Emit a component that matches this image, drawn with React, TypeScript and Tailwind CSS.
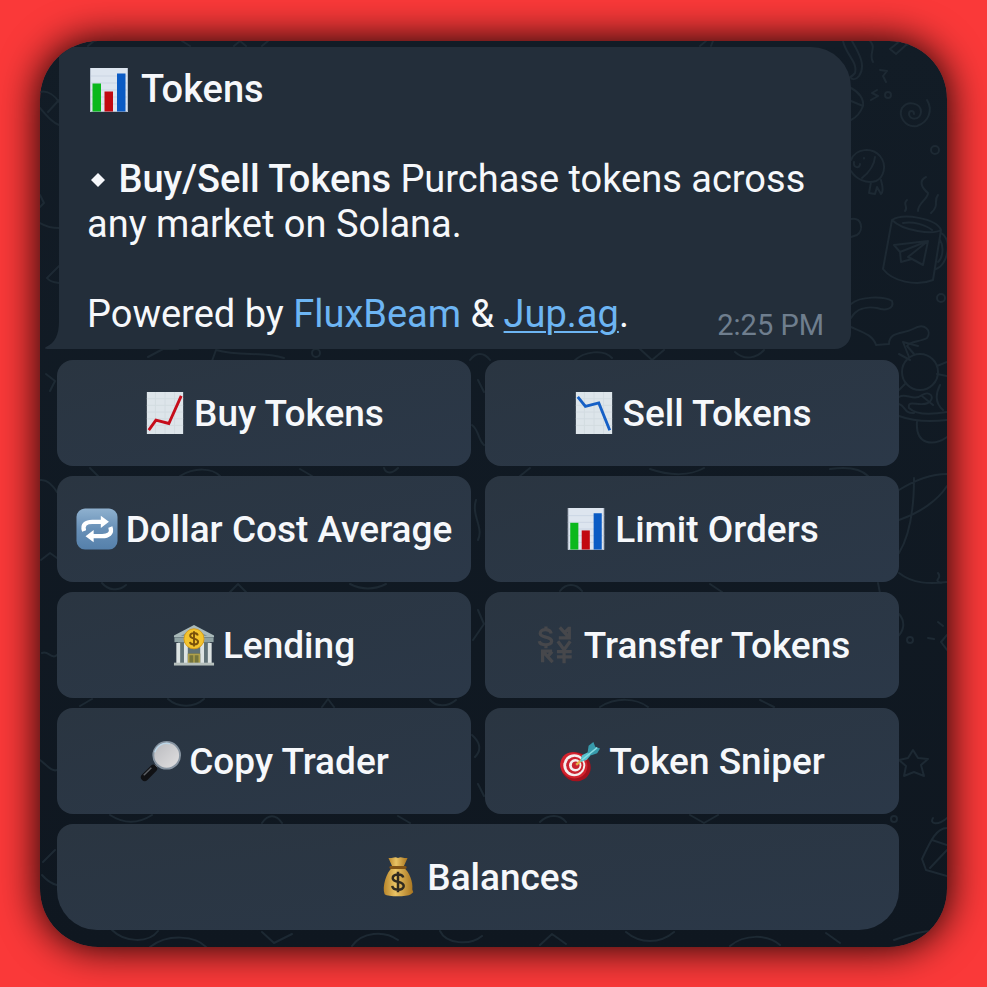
import type { ReactNode } from "react";
import { clsx } from "clsx";

const BarChart = () => (
  <>
    <rect x="3" y="0" width="38" height="44" fill="#dde5ef" />
    <path d="M3 8H41M3 15H41M3 22H41M3 29H41M3 36H41" stroke="#cbd5e3" strokeWidth="1" />
    <path d="M3.5 0V43.5H40.5V0" fill="none" stroke="#b3bdcb" strokeWidth="1" />
    <rect x="5.5" y="15.5" width="8.5" height="28" fill="#0bb81c" />
    <rect x="17.5" y="23.5" width="8.5" height="20" fill="#c20910" />
    <rect x="30" y="5.5" width="8.5" height="38" fill="#0b5bc4" />
  </>
);

const ChartUp = () => (
  <>
    <rect x="3" y="0" width="38" height="44" fill="#dde5ea" />
    <path d="M3 7H41M3 14H41M3 21H41M3 28H41M3 35H41M12 0V44M22 0V44M32 0V44" stroke="#d2dbe1" strokeWidth="1" />
    <path d="M5 40L12.5 29.5L26 33L39 4" fill="none" stroke="#c60d1b" strokeWidth="3" />
  </>
);

const ChartDown = () => (
  <>
    <rect x="3" y="0" width="38" height="44" fill="#dde5ea" />
    <path d="M3 7H41M3 14H41M3 21H41M3 28H41M3 35H41M12 0V44M22 0V44M32 0V44" stroke="#d2dbe1" strokeWidth="1" />
    <path d="M5 5L13 15L27 11.5L38.5 40" fill="none" stroke="#1660c6" strokeWidth="3" />
  </>
);

const Repeat = () => (
  <>
    <defs>
      <linearGradient id="repeat-bg" x1="0" y1="0" x2="0" y2="1">
        <stop offset="0" stopColor="#8fb1cf" />
        <stop offset="0.5" stopColor="#6890b7" />
        <stop offset="1" stopColor="#5580ab" />
      </linearGradient>
    </defs>
    <rect x="0.5" y="0.5" width="43" height="43" rx="9" fill="url(#repeat-bg)" />
    <path d="M8.500 24C6 17 11 14.500 17 14.500H27M36 20C38.500 27 33.500 29.500 27.500 29.500H17" fill="none" stroke="#fff" strokeWidth="4.500" />
    <path d="M26 8L34.500 14.500L26 21ZM18.500 23L10 29.500L18.500 36Z" fill="#fff" />
  </>
);

const Bank = () => (
  <>
    <rect x="5" y="17" width="34" height="24" fill="#5f7176" />
    <path d="M22 1L43 12V14H1V12Z" fill="#a9b9b9" />
    <path d="M22 5L36 12.500H8Z" fill="#7e9496" />
    <rect x="1.500" y="14" width="41" height="5" fill="#8fa2a3" />
    <path d="M5.500 20V41M13.500 20V41M30.500 20V41M38.500 20V41" stroke="#dce3e2" strokeWidth="4" />
    <path d="M15.500 41V31H28.500V41" fill="#74753d" />
    <path d="M16.500 41V32H27.500V41M22 32V41" fill="none" stroke="#b0a14a" strokeWidth="1.500" />
    <rect x="1" y="40.500" width="42" height="3" fill="#b5bfbc" />
    <circle cx="22" cy="15.500" r="10.500" fill="#f4c42d" stroke="#d99c18" />
    <path d="M26 12C25 8.500 18 8.800 18 12.200C18 16 26.300 14.500 26.300 18.600C26.300 22.300 18.500 22.500 17.700 18.800M22 7.500V23.500" fill="none" stroke="#79500b" strokeWidth="2" />
  </>
);

const Exchange = () => (
  <g fill="none" stroke="#46474b" strokeWidth="3.400">
    <path d="M18 10C17 4.500 6.500 4.500 6.500 10C6.500 15 18.500 12.500 18.500 18C18.500 23 6.500 23 5.500 18M12.500 2.500V6.500M12.500 21.500V25.500" />
    <path d="M37 3V14.500H26M27 3.500L36 13.500M32 9L37 4" />
    <path d="M25 18L31.500 27L38 18M31.500 27V41M24 29H39.500M24 34.500H39.500" />
    <path d="M9 40V28.500H19M10 29.500L19.500 40M14.500 34L19 29" />
  </g>
);

const Magnifier = () => (
  <>
    <defs>
      <linearGradient id="glass" x1="0" y1="0" x2="1" y2="1">
        <stop offset="0" stopColor="#b8b9bd" />
        <stop offset="1" stopColor="#e2e1e2" />
      </linearGradient>
    </defs>
    <path d="M18 27L13 32" stroke="#a7acb2" strokeWidth="4" />
    <path d="M15 30L6 39" stroke="#101114" strokeWidth="8" strokeLinecap="round" />
    <path d="M13 29L5 37" stroke="#5c5f64" strokeWidth="1.500" />
    <circle cx="29" cy="16" r="14" fill="url(#glass)" stroke="#8794a1" strokeWidth="2" />
    <path d="M16.500 13C18.500 6 25.500 2 32.500 4" fill="none" stroke="#bcd6e7" strokeWidth="1.500" />
  </>
);

const Target = () => (
  <>
    <ellipse cx="17.500" cy="28" rx="16" ry="15" transform="rotate(30 17.500 28)" fill="#a4121e" />
    <ellipse cx="15.500" cy="26.500" rx="14.500" ry="13.500" transform="rotate(30 15.500 26.500)" fill="#d3222d" />
    <circle cx="16" cy="26.500" r="11.500" fill="#f4eeee" />
    <circle cx="16.500" cy="26.500" r="9" fill="#c92430" />
    <circle cx="17" cy="26.500" r="6.500" fill="#f4eeee" />
    <circle cx="17.500" cy="26.500" r="4" fill="#c92430" />
    <path d="M18 26L26 19" stroke="#e2b34a" strokeWidth="2.500" />
    <path d="M22 23L24 16L32 12L34 15L29 21Z" fill="#55c0cd" />
    <path d="M30 13L31 6L36 2L38 7L43 9L40 14L34 16Z" fill="#379aab" />
    <path d="M24 21L40 8" stroke="#89dce2" strokeWidth="1.500" />
  </>
);

const MoneyBag = () => (
  <>
    <defs>
      <linearGradient id="bag" x1="0" y1="0" x2="1" y2="0">
        <stop offset="0" stopColor="#b9862b" />
        <stop offset="0.4" stopColor="#e9c364" />
        <stop offset="1" stopColor="#a8741f" />
      </linearGradient>
    </defs>
    <path d="M12 2C16 3 18 0 22 2C26 0 28 3 32 2L28 11H16Z" fill="url(#bag)" />
    <path d="M16 12H28C34 17 38 27 37 35L38 38L35.500 40C31 43 12 43 8 40C5 32 10 17 16 12Z" fill="url(#bag)" />
    <path d="M14.500 12H29.500" stroke="#825416" strokeWidth="3" strokeLinecap="round" />
    <path d="M27.500 22.500C26.500 18 16.500 18.500 16.500 23.200C16.500 28.500 28 25.500 28 31.500C28 36.800 16.500 36.500 16 31.300M22 16.500V38" fill="none" stroke="#302a20" strokeWidth="2.600" />
  </>
);

// Chat wallpaper line art, drawn in the gutters around the bubble and the keyboard.
const Wallpaper = () => (
  <svg
    viewBox="40 41 907 906"
    preserveAspectRatio="xMidYMid slice"
    className="absolute inset-0 size-full"
    fill="none"
    stroke="#1d2933"
    strokeWidth="2"
    strokeLinecap="round"
    strokeLinejoin="round"
    aria-hidden="true"
  >
    {/* top right */}
    <path d="M843 41C846 55 858 62 855 73C850 79 846 79 842 74M852 41C860 55 866 66 859 76C856 80 852 80 850 77M870 41C877 48 868 54 873 62" />
    <path d="M890 49L896 54L906 45C914 41 920 44 926 48M890 49L900 41M880 70L887 71L883 76L886 82M877 90L872 93L878 96L871 100" />
    <circle cx="888" cy="95" r="3" />
    <path d="M851 88C859 92 864 99 863 106C860 114 855 118 851 120M851 101L863 106" />
    <path d="M927 100C933 110 929 122 917 126C905 128 898 116 902 108C908 100 921 103 921 112C920 121 909 120 909 114C909 110 914 110 914 114" />
    <circle cx="935" cy="150" r="4" />
    <path d="M851 160C856 148 872 147 880 156C888 166 883 178 876 181C866 184 856 179 851 171M875 157C874 168 867 174 862 178M871 182L869 193L875 194L877 187L881 194C885 190 881 182 881 180M854 162C853 168 860 169 860 164M864 158V158.500" />
    {/* mug */}
    <path d="M892 220C903 213 936 218 941 230C933 235 903 231 892 220ZM892 220L883 269C892 281 916 287 933 280L941 230M903 223C913 221 926 225 932 230M941 233C952 238 949 264 936 269M940 240C944 246 943 258 938 262" />
    <path d="M894 245L928 241L923 265L912 259L901 262L900 252L894 245M900 252L928 241L908 257L912 259" />
    <path d="M926 177C918 181 922 188 928 193C928 199 918 203 918 211M938 195C933 201 940 205 931 213M907 200C902 204 909 207 905 211" />
    <path d="M851 219C862 217 864 230 857 235L851 237" />
    <circle cx="941" cy="298" r="4" />
    <path d="M851 304C860 296 884 296 892 301C895 309 885 311 877 308C866 306 856 309 851 318M851 327C862 332 873 335 876 345L889 344C889 331 904 334 913 329C925 322 932 331 927 338C920 342 910 341 907 346L914 354" />
    <circle cx="920" cy="372" r="18" />
    <path d="M909 357L903 342L918 346M899 354L910 360M937 366L947 362M937 374L947 376M905 384L899 390M899 397C906 392 913 402 922 395C930 390 936 398 928 403C919 407 907 399 909 408C916 415 930 415 947 412M899 416C915 422 930 422 947 420M899 404C906 406 904 414 914 413M917 421C915 446 934 446 947 437M940 385C935 395 936 404 943 410M922 396L933 405" />
    <path d="M899 490C915 480 932 474 947 474M914 478C914 510 910 535 899 553M899 520C920 513 938 500 947 486M899 573C913 584 930 584 947 582M938 573C943 579 932 580 941 583M899 614C906 622 904 632 896 638M878 583L880 593" />
    <circle cx="910" cy="640" r="3" />
    <path d="M928 638L934 639M938 622L943 626M947 635L941 642L947 650" />
    <path d="M913 750L918 758L928 759L921 765L924 776L914 772L904 776L906 766L899 760L908 758Z" />
    <path d="M947 828C936 828 930 842 922 859L926 870L947 876M947 850L930 868M932 840L947 845M933 818C929 824 938 826 947 818M894 940C910 934 922 931 934 931" />
    {/* left edge */}
    <path d="M40 92C48 90 55 96 59 102M40 108C48 117 52 122 59 125M48 112L59 100M40 195L44 203L40 207M40 223C47 227 52 228 59 228M47 278L59 266M47 278C51 283 55 282 59 283M46 374L55 381L50 391M40 480C47 479 52 484 57 492M41 560L50 553L57 558M42 653C48 650 52 660 57 655M40 760C48 766 52 772 57 770M43 862L55 850M42 875C48 882 53 884 57 885" />
    {/* gaps between rows */}
    <path d="M94 41L88 46M182 41L190 46M234 46L240 41L246 46M262 46L268 41M700 46L706 41M711 46L713 41M148 357L163 349H178M212 361L216 350C240 357 262 351 284 358" />
    <circle cx="316" cy="353" r="4" />
    <path d="M470 360C476 352 484 352 490 360M574 361C584 351 604 349 612 358M640 349L652 360L664 350M735 352C745 361 757 358 764 350" />
    <path d="M90 468L98 476M180 476C195 467 212 468 220 476M300 469L312 476M384 468C386 474 392 474 398 468M520 476L530 468M650 469C670 476 690 476 704 468M830 469C850 466 862 470 868 476M478 380L484 392M472 425C479 430 478 440 484 445" />
    <path d="M102 583C108 590 118 592 126 585M230 592L238 584L246 592M350 584C362 590 374 590 386 584M560 591C566 583 576 583 582 591M710 584L722 592M476 500C471 515 484 528 478 540M478 610L484 624L473 640" />
    <path d="M80 706L92 699M168 699C178 708 194 708 204 699M322 707L328 699L334 707M430 700C436 707 448 707 456 700M600 707C616 697 636 698 648 707M760 700L774 707M472 735C480 742 482 750 475 757" />
    <path d="M110 815C124 824 138 824 152 815M262 823C268 814 276 814 282 823M398 816L410 823M540 822C548 814 560 814 566 822M690 815L704 823L718 815M478 784L484 796" />
    <circle cx="894" cy="819" r="3" />
    <path d="M112 930C124 942 148 944 158 931M150 947C168 933 196 936 206 947M262 932L274 943L292 934M352 946C362 932 384 930 398 940M440 931C446 944 470 946 482 936M540 945L552 934L566 944M626 932C640 944 660 944 674 932M730 946C744 934 768 934 780 945M826 933L840 943" />
  </svg>
);

const Emoji = ({ children, large }: { children: ReactNode; large?: boolean }) => (
  <svg viewBox="0 0 44 44" className={clsx("shrink-0", large ? "size-11" : "size-[42px]")} aria-hidden="true">
    {children}
  </svg>
);

const actions = [
  { label: "Buy Tokens", icon: <ChartUp /> },
  { label: "Sell Tokens", icon: <ChartDown /> },
  { label: "Dollar Cost Average", icon: <Repeat /> },
  { label: "Limit Orders", icon: <BarChart /> },
  { label: "Lending", icon: <Bank /> },
  { label: "Transfer Tokens", icon: <Exchange /> },
  { label: "Copy Trader", icon: <Magnifier /> },
  { label: "Token Sniper", icon: <Target /> },
  { label: "Balances", icon: <MoneyBag />, wide: true },
];

const Message = () => (
  <article className="relative ml-0.5 mr-12 rounded-tr-[40px] rounded-br-2xl bg-[#232e3a] pt-5 pr-[27px] pb-3 pl-7 text-[38px] leading-[45px] text-[#f6f8fb]">
    <svg viewBox="0 0 14 28" className="absolute -left-3.5 bottom-0 h-7 w-3.5" aria-hidden="true">
      <path d="M14 0C14 14 10 22 1 26C-0.500 27 0 28 2 28H14Z" fill="#232e3a" />
    </svg>
    <h1 className="flex items-center gap-2.5 font-medium">
      <Emoji large>
        <BarChart />
      </Emoji>
      Tokens
    </h1>
    <p className="mt-[45px]">
      <svg viewBox="0 0 22 20" className="inline-block h-5 w-[22px] align-baseline" aria-hidden="true">
        <path d="M11 1L18 8L11 15L4 8Z" fill="#f6f8fb" />
      </svg>{" "}
      <strong className="font-medium">Buy/Sell Tokens</strong> Purchase tokens across any market on Solana.
    </p>
    <div className="mt-[45px] flex items-end justify-between">
      <p>
        Powered by{" "}
        <a href="#fluxbeam" className="text-[#6db5f3]">
          FluxBeam
        </a>{" "}
        &amp;{" "}
        <a href="#jup" className="text-[#6db5f3] underline decoration-2 underline-offset-4">
          Jup.ag
        </a>
        .
      </p>
      <time className="-mb-1.5 text-[29px] leading-9 text-[#6f7e8e]">2:25 PM</time>
    </div>
  </article>
);

export default function App() {
  return (
    <main className="min-h-screen bg-[#fa3939] px-10 pt-[41px] pb-10 font-['Roboto',sans-serif]">
      <section className="relative overflow-hidden rounded-[58px] bg-linear-to-b from-[#121c26] to-[#0f1720] pt-1.5 pr-12 pb-[17px] pl-[17px] shadow-[0_0_40px_#000]">
        <Wallpaper />
        <Message />
        <div className="relative mt-[11px] grid grid-cols-2 gap-x-3.5 gap-y-2.5">
          {actions.map(({ label, icon, wide }) => (
            <button
              key={label}
              type="button"
              className={clsx(
                "flex h-[106px] items-center justify-center gap-2 bg-linear-to-br from-[#2a3541] to-[#2b3848] text-[37px] leading-[45px] font-medium whitespace-nowrap text-[#f6f8fb]",
                wide ? "col-span-2 rounded-t-2xl rounded-b-[40px]" : "rounded-2xl"
              )}
            >
              <Emoji>{icon}</Emoji>
              {label}
            </button>
          ))}
        </div>
      </section>
    </main>
  );
}
